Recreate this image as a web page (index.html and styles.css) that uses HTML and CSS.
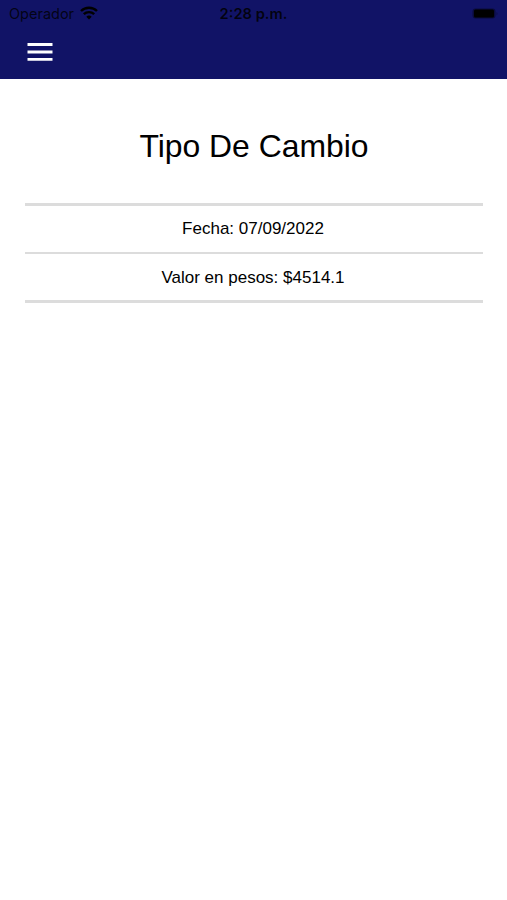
FILE: index.html
```html
<!DOCTYPE html>
<html lang="es">
<head>
    <meta charset="UTF-8">
    <meta name="viewport" content="width=device-width, initial-scale=1.0">
    <title>Tipo De Cambio</title>
    <link rel="stylesheet" href="styles.css">
</head>
<body>
    <header class="header">
        <div class="status-bar">
            <div class="carrier">
                <span>Operador</span>
                <svg viewBox="0 0 18 14" width="18" height="14">
                    <path d="M1 5a11.5 11.5 0 0 1 16 0M3.8 8.2a7.5 7.5 0 0 1 10.4 0" fill="none" stroke="#000" stroke-width="2.4"/>
                    <path d="M9 13.6L6.3 10.8a3.9 3.9 0 0 1 5.4 0z"/>
                </svg>
            </div>
            <div class="time">2:28 p.m.</div>
            <div class="battery">
                <svg viewBox="0 0 26 12" width="26" height="12">
                    <rect x="0.5" y="0.5" width="23" height="10" rx="3" fill="#000" opacity="0.4"/>
                    <rect x="2" y="1.5" width="20" height="8" rx="1.5" fill="#000"/>
                    <path d="M24.5 4v3.5q1-.5 1-1.7t-1-1.8z" fill="#000" opacity="0.3"/>
                </svg>
            </div>
        </div>
        <button class="menu-btn" aria-label="Menú">
            <svg viewBox="0 0 26 20" width="26" height="20">
                <path d="M.5 2.5h25M.5 10h25M.5 17.3h25" fill="none" stroke="#fff" stroke-width="2.8"/>
            </svg>
        </button>
    </header>

    <main class="content">
        <h1>Tipo De Cambio</h1>
        <div class="rate-list">
            <p>Fecha: 07/09/2022</p>
            <p>Valor en pesos: $4514.1</p>
        </div>
    </main>
</body>
</html>
```

FILE: styles.css
```css
body {
    margin: 0;
    min-height: 100vh;
    background: #fff;
    color: #000;
    font-family: "Liberation Sans", Arial, sans-serif;
}
.header {
    height: 79px;
    background: #111366;
}
.status-bar {
    display: grid;
    grid-template-columns: 1fr auto 1fr;
    align-items: center;
    height: 27px;
    padding: 0 9px;
    font-family: Inter, sans-serif;
    font-size: 14.5px;
}
.carrier {
    display: flex;
    align-items: center;
    gap: 6px;
    color: rgba(0, 0, 0, 0.8);
}
.carrier svg {
    margin-top: -2px;
}
.time {
    font-weight: 600;
    font-size: 14.7px;
    color: rgba(0, 0, 0, 0.85);
}
.battery {
    display: flex;
    justify-content: flex-end;
}
.menu-btn {
    display: block;
    margin: 15px 0 0 27px;
    padding: 0;
    border: 0;
    background: none;
}
.menu-btn svg {
    display: block;
}
.content {
    padding: 47px 24px 0 25px;
    text-align: center;
}
h1 {
    margin: 0 0 37px;
    font-size: 31.9px;
    font-weight: normal;
    line-height: 40px;
}
.rate-list {
    border-top: 3px solid #dcdcdc;
}
.rate-list p {
    margin: 0;
    height: 46px;
    padding-right: 2px;
    border-bottom: 2px solid #dcdcdc;
    font-size: 17px;
    line-height: 46px;
}
.rate-list p:last-child {
    border-bottom-width: 3px;
    line-height: 48px;
}
```
